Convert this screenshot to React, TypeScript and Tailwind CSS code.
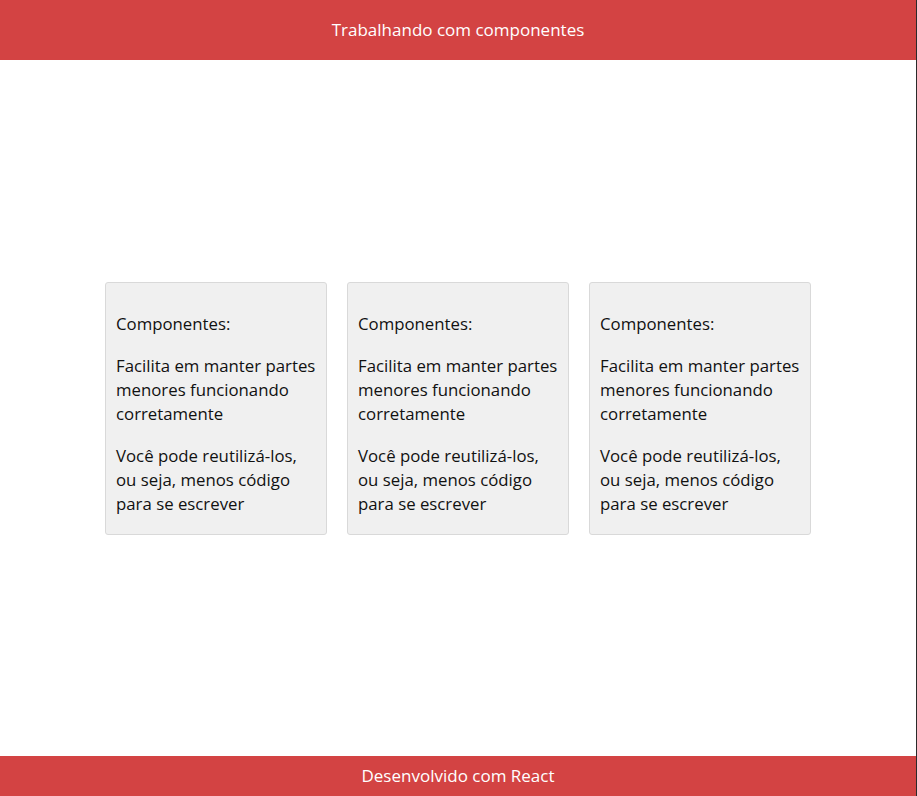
const cards = [1, 2, 3];

const Card = () => (
  <div className="w-[222px] bg-[#f0f0f0] border border-[#d9d9d9] rounded-[3px] px-[10px] pt-[11px] pb-0 text-[#111] text-[16.8px]">
    <p className="my-[18px]">Componentes:</p>
    <p className="my-[18px]">
      <span className="block whitespace-nowrap">Facilita em manter partes</span>
      <span className="block">menores funcionando</span>
      <span className="block">corretamente</span>
    </p>
    <p className="my-[18px]">
      <span className="block whitespace-nowrap">Você pode reutilizá-los,</span>
      <span className="block">ou seja, menos código</span>
      <span className="block">para se escrever</span>
    </p>
  </div>
);

export default function App() {
  return (
    <div className="h-[796px] flex flex-col bg-white border-r border-[#2a2a2a] font-['Open_Sans',sans-serif] text-[17px] leading-[24px]">
      <header className="h-[60px] shrink-0 bg-[#d34343] text-white flex items-center justify-center">
        Trabalhando com componentes
      </header>

      <main className="flex-1 flex items-center justify-center gap-[20px]">
        {cards.map((c) => (
          <Card key={c} />
        ))}
      </main>

      <footer className="h-[40px] shrink-0 bg-[#d34343] text-white flex items-center justify-center">
        Desenvolvido com React
      </footer>
    </div>
  );
}
